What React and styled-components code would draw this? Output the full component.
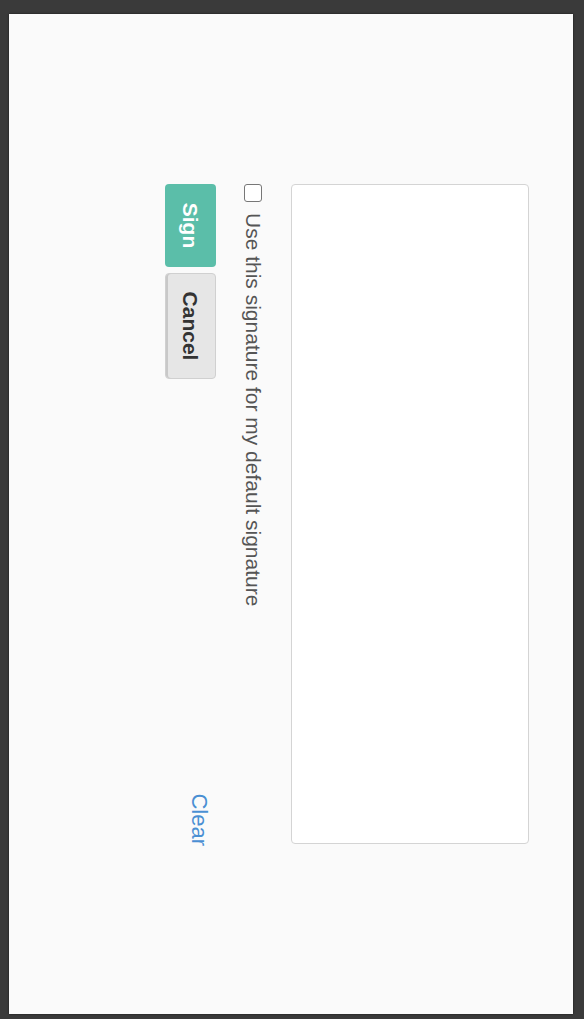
import styled, { createGlobalStyle } from "styled-components";

const GlobalStyle = createGlobalStyle`
  html, body {
    margin: 0;
    padding: 0;
    background: #3a3a3a;
    font-family: "Liberation Sans", Arial, sans-serif;
  }
`;

const Page = styled.div`
  padding: 14px 11px 5px 9px;
`;

const Panel = styled.div`
  width: 564px;
  height: 1000px;
  background: #fafafa;
  box-shadow: 0 0 2px rgba(0, 0, 0, 0.6);
  overflow: hidden;
`;

// the dialog is shown turned a quarter clockwise
const Turned = styled.div`
  width: 1000px;
  height: 564px;
  transform-origin: 0 0;
  transform: translateX(564px) rotate(90deg);
  display: flex;
  flex-direction: column;
  align-items: center;
  padding-top: 44px;
  box-sizing: border-box;
`;

const Form = styled.div`
  width: 660px;
  display: flex;
  flex-direction: column;
`;

const Pad = styled.div`
  height: 236px;
  background: #fff;
  border: 1px solid #d4d4d4;
  border-radius: 4px;
`;

const CheckRow = styled.label`
  margin-top: 28px;
  display: flex;
  align-items: center;
  gap: 11px;
  color: #555;
  font-size: 21px;
  line-height: 20px;
`;

const Box = styled.input`
  appearance: none;
  margin: 0;
  width: 18px;
  height: 18px;
  border: 1.5px solid #777;
  border-radius: 3px;
  background: #fff;
  box-sizing: border-box;
`;

const Actions = styled.div`
  margin-top: 27px;
  display: flex;
  align-items: flex-start;
  gap: 6px;
`;

const Button = styled.button`
  width: ${(p) => p.$w}px;
  height: 51px;
  padding: 0;
  border-radius: 4px;
  font-family: inherit;
  font-size: 21px;
  font-weight: 700;
  background: ${(p) => (p.$primary ? "#5bbea9" : "#e6e6e6")};
  color: ${(p) => (p.$primary ? "#fff" : "#333")};
  border: ${(p) => (p.$primary ? "none" : "1px solid #d0d0d0")};
  box-shadow: ${(p) => (p.$primary ? "none" : "inset 0 -2px 0 #c8c8c8")};
`;

const ClearLink = styled.a`
  margin-left: auto;
  margin-right: -2px;
  padding-top: 7px;
  color: #4a8fd3;
  font-size: 22px;
  line-height: 20px;
  text-decoration: none;
`;

export default function App() {
  return (
    <>
      <GlobalStyle />
      <Page>
        <Panel>
          <Turned>
            <Form>
              <Pad />
              <CheckRow>
                <Box type="checkbox" />
                Use this signature for my default signature
              </CheckRow>
              <Actions>
                <Button $primary $w={83}>Sign</Button>
                <Button $w={106}>Cancel</Button>
                <ClearLink href="#">Clear</ClearLink>
              </Actions>
            </Form>
          </Turned>
        </Panel>
      </Page>
    </>
  );
}
